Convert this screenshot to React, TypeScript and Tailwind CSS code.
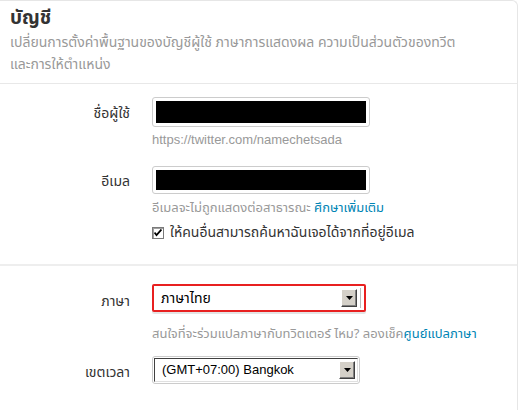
import React from "react";

const font = { fontFamily: "'Noto Sans Thai', 'Liberation Sans', 'Noto Sans', sans-serif" };

function Arrow() {
  return (
    <div className="w-[16px] h-[18px] bg-[#d4d0c8] border-t border-l border-t-white border-l-white border-b border-r border-b-[#404040] border-r-[#404040] flex items-center justify-center shadow-[inset_-1px_-1px_0_#808080]">
      <svg width="7" height="4" viewBox="0 0 7 4"><path d="M0 0h7L3.5 4z" fill="#000" /></svg>
    </div>
  );
}

export default function App() {
  return (
    <div className="w-[519px] h-[410px] bg-white overflow-hidden" style={font}>
      <div className="w-[518px] h-[420px] border-t border-r border-[#e6e6e6] rounded-tr-[6px]">
        <div className="pl-[10px] pt-[6px] h-[83px] border-b border-[#e8e8e8]">
          <div className="text-[19px] font-bold text-[#333] leading-[24px]">บัญชี</div>
          <div className="text-[14px] text-[#999] leading-[22px] mt-[1px]">
            เปลี่ยนการตั้งค่าพื้นฐานของบัญชีผู้ใช้ ภาษาการแสดงผล ความเป็นส่วนตัวของทวีต<br />และการให้ตำแหน่ง
          </div>
        </div>
        <div className="h-[182px] border-b-2 border-[#eeeeee] pt-[13px]">
          <div className="flex">
            <div className="w-[130px] text-right text-[14px] text-[#333] pt-[6px]">ชื่อผู้ใช้</div>
            <div className="ml-[22px]">
              <div className="w-[218px] h-[30px] rounded-[3px] border border-[#ccc] p-[3px] bg-white">
                <div className="w-full h-full bg-black" />
              </div>
              <div className="text-[13px] text-[#999] mt-[4px] leading-[18px]" style={{ fontFamily: "'Liberation Sans', Arial, sans-serif" }}>https://twitter.com/namechetsada</div>
            </div>
          </div>
          <div className="flex mt-[17px]">
            <div className="w-[130px] text-right text-[14px] text-[#333] pt-[5px]">อีเมล</div>
            <div className="ml-[22px]">
              <div className="w-[218px] h-[28px] rounded-[3px] border border-[#ccc] p-[3px] bg-white">
                <div className="w-full h-full bg-black" />
              </div>
              <div className="text-[13px] text-[#999] mt-[5px] leading-[18px]">
                อีเมลจะไม่ถูกแสดงต่อสาธารณะ <span className="text-[#0084b4]">ศึกษาเพิ่มเติม</span>
              </div>
              <div className="flex items-center mt-[5px]">
                <div className="w-[12px] h-[12px] border border-[#7a7a7a] bg-white flex items-center justify-center shadow-[inset_1px_1px_0_#a0a0a0]">
                  <svg width="8" height="8" viewBox="0 0 8 8"><path d="M0.5 3.5l2 2.5 5-5.5" stroke="#000" strokeWidth="1.8" fill="none" /></svg>
                </div>
                <span className="ml-[6px] text-[14px] text-[#333]">ให้คนอื่นสามารถค้นหาฉันเจอได้จากที่อยู่อีเมล</span>
              </div>
            </div>
          </div>
        </div>
        <div className="pt-[18px]">
          <div className="flex">
            <div className="w-[130px] text-right text-[14px] text-[#333] pt-[7px]">ภาษา</div>
            <div className="ml-[22px]">
              <div className="w-[214px] h-[28px] border-2 border-[#e82020] rounded-[2px] bg-white flex items-center pl-[7px] pr-[7px] relative shadow-[0_2px_0_#e4e4e4]">
                <span className="text-[14px] text-black flex-1">ภาษาไทย</span>
                <Arrow />
                <div className="absolute right-[3px] top-[2px] bottom-[2px] w-[1px] bg-[#bbb]" />
              </div>
              <div className="text-[13px] text-[#999] mt-[13px] leading-[18px]">
                สนใจที่จะร่วมแปลภาษากับทวิตเตอร์ ไหม? ลองเช็ค<span className="text-[#0084b4]">ศูนย์แปลภาษา</span>
              </div>
            </div>
          </div>
          <div className="flex mt-[13px]">
            <div className="w-[130px] text-right text-[14px] text-[#333] pt-[6px]">เขตเวลา</div>
            <div className="ml-[22px]">
              <div className="w-[208px] h-[28px] rounded-[3px] border border-[#ccc] bg-white p-[1px]">
                <div className="w-full h-full border-t border-l border-t-[#404040] border-l-[#404040] border-b border-r border-b-[#e0e0e0] border-r-[#e0e0e0] flex items-center pl-[7px] pr-[2px]">
                  <span className="text-[13px] text-black flex-1" style={{ fontFamily: "'Liberation Sans', Arial, sans-serif" }}>(GMT+07:00) Bangkok</span>
                  <Arrow />
                </div>
              </div>
            </div>
          </div>
        </div>
      </div>
    </div>
  );
}
